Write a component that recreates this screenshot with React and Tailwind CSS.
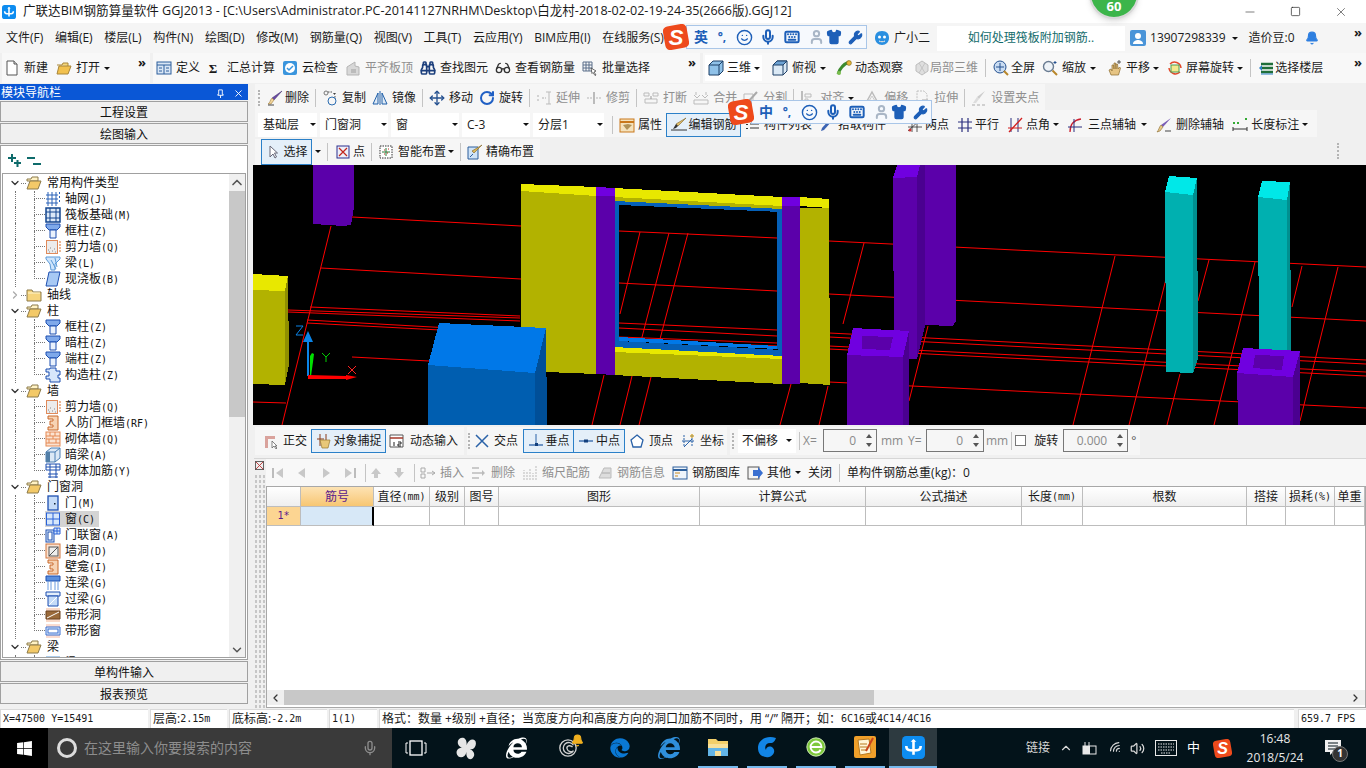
import { Binoculars, Glasses, Move, RotateCw, ChevronDown, ChevronRight, ChevronUp, ChevronLeft, Mic, Bell, Minus, Square, X, Smile, Keyboard, Shirt, Wrench, User, Wifi, Volume2 } from "lucide-react";
import { FaEdge, FaInternetExplorer, FaWindows } from "react-icons/fa";

const ui = "font-['Open_Sans','Noto_Sans_CJK_SC',sans-serif]";
const mono = "font-['DejaVu_Sans_Mono','Noto_Sans_CJK_SC',monospace] text-[10px]";

function Caret({ className = "" }) {
  return <span className={"inline-block w-0 h-0 shrink-0 border-x-[3px] border-t-[3px] border-x-transparent border-t-[#111] " + className} />;
}

function Sep() {
  return <span className="w-px h-[18px] bg-[#c4c4c4] shrink-0" />;
}

function Grip() {
  return <span className="block w-[3px] h-[16px] shrink-0 border-l-2 border-dotted border-[#b4b4b4]" />;
}

function More() {
  return <span className="ml-auto mr-1 text-[13px] font-bold leading-none -mt-3">»</span>;
}

function Ico({ children }) {
  return <svg viewBox="0 0 16 16" className="w-4 h-4 shrink-0">{children}</svg>;
}

function Tool({ ic, t, off, caret, gap = "gap-1", className = "" }) {
  return (
    <div className={"flex items-center shrink-0 whitespace-nowrap " + gap + (off ? " text-[#8f8f8f] " : " ") + className}>
      {ic}
      <span>{t}</span>
      {caret && <Caret />}
    </div>
  );
}

// toolbar icons
const icons = {
  page: <Ico><path d="M3 1h7l3 3v11H3z" fill="#fff" stroke="#555" /><path d="M10 1v3h3" fill="#ddd" stroke="#555" /></Ico>,
  open: <Ico><path d="M1 5h5l1-2h5v3" fill="#f5d77a" stroke="#a8863a" /><path d="M1 14l2-8h12l-3 8z" fill="#f2c14e" stroke="#a8863a" /></Ico>,
  define: <Ico><rect x="1" y="2" width="14" height="12" fill="#d9e6f5" stroke="#2c5f9c" /><path d="M1 5h14M8 5v9M3 8h3M3 11h3M10 8h3M10 11h3" stroke="#2c5f9c" fill="none" /></Ico>,
  cloud: <Ico><rect x="1" y="1" width="14" height="14" rx="2" fill="#3a95dd" /><circle cx="8" cy="8" r="5" fill="#fff" /><path d="M5 8l2 2 4-4" stroke="#3a95dd" strokeWidth="1.5" fill="none" /></Ico>,
  flat: <Ico><path d="M2 15V7l8-5v4l4 1v8z" fill="#d8d8d8" stroke="#b5b5b5" /><path d="M6 9h5v4H6z" fill="#bbb" /></Ico>,
  batch: <Ico><path d="M1 2h9v9H1zM1 5h9M1 8h9M4 2v9M7 2v9" fill="none" stroke="#5b6f8a" /><path d="M9 8l5 3-2 1 2 3-1 .5-2-3-1 1z" fill="#fff" stroke="#333" strokeWidth=".7" /></Ico>,
  cube: <Ico><path d="M5 1h10v10l-4 4H1V5z" fill="#8fc1e8" stroke="#1d3f66" /><path d="M1 5h10v10M11 5l4-4" fill="none" stroke="#1d3f66" /></Ico>,
  topview: <Ico><path d="M5 1h10v10l-4 4H1V5z" fill="#dbe9f5" stroke="#1d3f66" /><path d="M1 5l4-4h10l-4 4z" fill="#6ea3d4" stroke="#1d3f66" /><path d="M11 5v10" stroke="#1d3f66" /></Ico>,
  orbit: <Ico><path d="M2 14C4 8 8 4 13 2" stroke="#3d8b2f" strokeWidth="3" fill="none" /><circle cx="13" cy="3" r="2.4" fill="#e8b93a" stroke="#7a6212" strokeWidth=".6" /><circle cx="3" cy="13" r="2" fill="#7bbf4e" /></Ico>,
  local3d: <Ico><path d="M8 1l6 4v6l-6 4-6-4V5z" fill="#dedede" stroke="#bdbdbd" /><path d="M5 3l6 10M11 3L5 13" stroke="#c5c5c5" /></Ico>,
  full: <Ico><circle cx="7" cy="7" r="6" fill="#c9dcf2" stroke="#24508f" /><path d="M7 3v8M3 7h8" stroke="#24508f" /><path d="M11 11l4 4" stroke="#b8862a" strokeWidth="2" /></Ico>,
  zoom: <Ico><circle cx="6.5" cy="6.5" r="5" fill="#eef3f8" stroke="#6a7c92" strokeWidth="1.4" /><path d="M10.5 10.5l4.5 4.5" stroke="#b8862a" strokeWidth="2" /><path d="M13 1v3M11.5 2.500h3" stroke="#24508f" /></Ico>,
  pan: <Ico><path d="M4 15l-2-5 2-1 1 2V5l1.500 0 .5 4V3l1.500 0 .5 6V4l1.500 0 .5 5 1.500-2 1 1-2 7z" fill="#e6c483" stroke="#8a6a2e" strokeWidth=".7" /><path d="M12 0v4M10 2h4" stroke="#333" strokeWidth=".8" /></Ico>,
  rotate: <Ico><path d="M3 4a6.500 6.500 0 0 1 11 4" stroke="#e2492a" strokeWidth="1.500" fill="none" /><path d="M13 12a6.500 6.500 0 0 1-11-4" stroke="#e2492a" strokeWidth="1.500" fill="none" /><rect x="4" y="5" width="8" height="7" fill="#f4e98e" stroke="#4a9b52" /></Ico>,
  floors: <Ico><path d="M3 4h12M3 8h12M3 12h12" stroke="#1f6f3a" strokeWidth="2.500" /><path d="M1 8l3-3v6z" fill="#2a7fc4" /><path d="M3 14h12" stroke="#2a7fc4" /></Ico>,
  brush: <Ico><path d="M15 1L7 10l-2-2z" fill="#6a4aa5" stroke="#3c2a66" strokeWidth=".5" /><path d="M5 8l2 2-3 4H1c2-1 2-4 4-6z" fill="#f2d59a" stroke="#9c7b3a" strokeWidth=".6" /><path d="M1 15h6" stroke="#444" /></Ico>,
  copy: <Ico><circle cx="4" cy="3" r="2" fill="none" stroke="#777" /><path d="M6 2h5M13 6v3" stroke="#555" strokeDasharray="1.500 1" /><circle cx="10" cy="11" r="4" fill="none" stroke="#2b6cb0" /><path d="M11 3l3 0-1.500 2z" fill="#444" /></Ico>,
  mirror: <Ico><path d="M8 1v14" stroke="#1f5fa8" /><path d="M6 3L1 14h5z" fill="#dfeaf6" stroke="#1f5fa8" /><path d="M10 3l5 11h-5z" fill="#dfeaf6" stroke="#1f5fa8" /></Ico>,
  extend: <Ico><path d="M1 6h3M1 10h3M6 8h4" stroke="#b0b0b0" strokeDasharray="2 1" /><path d="M13 2v12M10 2h5M10 14h5" stroke="#bbb" /></Ico>,
  trim: <Ico><path d="M1 8h5M10 8h5" stroke="#b5b5b5" strokeDasharray="2 1" /><path d="M8 2v12" stroke="#bbb" strokeWidth="2" /></Ico>,
  breakI: <Ico><path d="M1 3h5v3H1zM10 3h5v3h-5z" fill="none" stroke="#bbb" /><path d="M2 9h12v4H2z" fill="none" stroke="#bbb" /><path d="M8 6v3" stroke="#999" /></Ico>,
  merge: <Ico><path d="M3 2v3M13 2v3M1 5l3 3 3-3M9 5l3 3 3-3" fill="none" stroke="#bbb" /><path d="M1 10h14v4H1z" fill="none" stroke="#bbb" /></Ico>,
  split: <Ico><path d="M1 4h9v10H1z" fill="none" stroke="#bbb" /><path d="M5 12L14 2" stroke="#aaa" strokeWidth="2" /></Ico>,
  align: <Ico><path d="M2 1v14h12" stroke="#aaa" fill="none" strokeWidth="1.500" /><path d="M5 4h6v3H5zM5 9h3v3H5z" fill="none" stroke="#bbb" /></Ico>,
  offset: <Ico><path d="M8 2l6 11H2z" fill="none" stroke="#bbb" strokeWidth="1.500" /><path d="M8 6l3 5H5z" fill="none" stroke="#ccc" /></Ico>,
  stretch: <Ico><path d="M3 1h7l3 3v11H3z" fill="none" stroke="#c0c0c0" strokeDasharray="2 1" /><path d="M8 10h6" stroke="#aaa" /></Ico>,
  grip: <Ico><path d="M14 1L8 9l-2-2z" fill="#ccc" /><path d="M1 15h3M6 15h3M11 15h3" stroke="#aaa" /><path d="M6 7l2 2-3 4-3 0z" fill="#ddd" /></Ico>,
  attr: <Ico><rect x="1" y="2" width="14" height="13" fill="#f4e2bd" stroke="#c9781c" /><path d="M1 5h14" stroke="#c9781c" strokeWidth="2" /><path d="M4 8l4 5 5-5-4-1z" fill="#b09257" /></Ico>,
  rebar: <Ico><path d="M15 1L7 9l-2-2z" fill="#dfbe6a" stroke="#7d6125" strokeWidth=".6" /><path d="M5 7l2 2-2 2-3 1z" fill="#333" /><path d="M0 13h16" stroke="#333" /></Ico>,
  list: <Ico><path d="M2 3v1M2 7v1M2 11v1" stroke="#333" strokeWidth="2" /><path d="M5 3h9M5 7h9M5 11h9" stroke="#333" /></Ico>,
  pick: <Ico><path d="M12 2l2 2-8 9-3 1 1-3z" fill="#3a63b3" /></Ico>,
  twop: <Ico><path d="M1 14L14 2M1 10h14M5 2v13M10 2v13" stroke="#333" strokeWidth=".8" /><circle cx="3" cy="13" r="1.500" fill="#c33" /><circle cx="13" cy="3" r="1.500" fill="#3a3" /></Ico>,
  parallel: <Ico><path d="M1 5h14M1 11h14M5 1v14M11 1v14" stroke="#2b2f7e" strokeWidth="1.200" /></Ico>,
  angle: <Ico><path d="M4 1v14M11 1v14" stroke="#2b2f7e" /><path d="M2 15L15 1" stroke="#d41f1f" strokeWidth="1.300" /><path d="M1 11h14" stroke="#d41f1f" /></Ico>,
  threep: <Ico><path d="M3 15C3 7 7 3 14 2" stroke="#cc1f2f" strokeWidth="1.300" fill="none" /><path d="M1 10h14M7 2v13" stroke="#2b2f7e" /></Ico>,
  delaxis: <Ico><path d="M15 1L7 10l-2-2z" fill="#7a5db5" /><path d="M5 8l2 2-3 4-3 1c2-2 2-5 4-7z" fill="#e5c888" stroke="#8a6a2e" strokeWidth=".6" /><path d="M9 14h6" stroke="#444" /></Ico>,
  dim: <Ico><path d="M1 12h14M1 10v4M15 10v4" stroke="#333" /><rect x="1" y="5" width="2" height="2" fill="#3a3" /><rect x="13" y="1" width="2" height="2" fill="#3a3" /><rect x="5" y="5" width="2" height="2" fill="#3a3" /></Ico>,
  select: <Ico><path d="M5 2v11l3-3 2 4 1.500-1-2-4h3z" fill="#fff" stroke="#667" /></Ico>,
  point: <Ico><rect x="2" y="2" width="12" height="12" fill="#eef0fa" stroke="#2b2f8e" /><path d="M4 4l8 8M12 4l-8 8" stroke="#c2261c" strokeWidth="1.200" /></Ico>,
  smart: <Ico><rect x="2" y="2" width="12" height="12" fill="#fff" stroke="#333" strokeDasharray="1.500 1" /><path d="M4 8h8M8 4v8" stroke="#2d7d3a" /><path d="M6 6h1M9 9h1M6 10h1M10 5h1" stroke="#c2261c" /></Ico>,
  exact: <Ico><path d="M1 3h10v12H1z" fill="#cfe3f7" stroke="#2c5f9c" /><path d="M15 1L7 9l-2-2z" fill="#dcb85a" stroke="#7d6125" strokeWidth=".6" /><path d="M3 13l3-3" stroke="#2c5f9c" /></Ico>,
  ortho: <Ico><path d="M2 15V3h10v3H5v9z" fill="#d9a29c" /><path d="M9 8v7l2-2 2 3 1-1-2-2h2z" fill="#fff" stroke="#555" strokeWidth=".7" /></Ico>,
  snap: <Ico><path d="M4 1v12M10 1v6M1 6h7" stroke="#8a3a1a" /><path d="M4 7h10l-2 8H6z" fill="#e8c879" stroke="#95762c" strokeWidth=".7" /></Ico>,
  dyn: <Ico><path d="M1 2h13v12H1z" fill="#fff" stroke="#555" /><path d="M1 5h13" stroke="#a5382a" strokeWidth="1.500" /><path d="M5 9v4M9 9h3v2h-3v2h3" stroke="#222" fill="none" /></Ico>,
  cross: <Ico><path d="M2 2l12 12M14 2L2 14" stroke="#2a62a8" strokeWidth="1.500" /></Ico>,
  perp: <Ico><path d="M1 12h14" stroke="#2a62a8" strokeWidth="1.300" /><path d="M8 1v11" stroke="#2a62a8" /><rect x="7" y="10" width="3" height="3" fill="#123f7c" /></Ico>,
  mid: <Ico><path d="M1 8h14" stroke="#2a62a8" strokeWidth="1.300" /><rect x="6" y="6.500" width="4" height="3" fill="#123f7c" /></Ico>,
  vertex: <Ico><path d="M8 2l6 5-2 7H4L2 7z" fill="#fff" stroke="#2a62a8" strokeWidth="1.300" /></Ico>,
  coord: <Ico><path d="M4 2v12M12 2v12" stroke="#2a62a8" strokeDasharray="2 1" /><path d="M2 8h12M4 14l8-8" stroke="#2a62a8" /><circle cx="12" cy="3" r="1.300" fill="none" stroke="#d4a017" /></Ico>,
  first: <Ico><path d="M3 3v10" stroke="#bcbcbc" strokeWidth="2" /><path d="M13 3L6 8l7 5z" fill="#c8c8c8" /></Ico>,
  prev: <Ico><path d="M11 3L4 8l7 5z" fill="#c8c8c8" /></Ico>,
  next: <Ico><path d="M5 3l7 5-7 5z" fill="#c8c8c8" /></Ico>,
  last: <Ico><path d="M13 3v10" stroke="#bcbcbc" strokeWidth="2" /><path d="M3 3l7 5-7 5z" fill="#c8c8c8" /></Ico>,
  up: <Ico><path d="M8 3l5 6h-3v4H6V9H3z" fill="#c8c8c8" /></Ico>,
  down: <Ico><path d="M8 13L3 7h3V3h4v4h3z" fill="#c8c8c8" /></Ico>,
  ins: <Ico><path d="M1 3h4v4H1zM1 9h4v4H1z" fill="none" stroke="#aaa" /><path d="M7 8h8M12 6l3 2-3 2" stroke="#aaa" fill="none" /></Ico>,
  del: <Ico><path d="M1 3h7M1 8h12M1 13h7" stroke="#bbb" strokeWidth="1.500" /><path d="M11 5l3 3-3 3z" fill="#bbb" /></Ico>,
  scale: <Ico><path d="M2 15V5M5 15V7M8 15V3M11 15V8M14 15V1" stroke="#bbb" strokeDasharray="2 1" /></Ico>,
  info: <Ico><path d="M2 13L7 3h7v10z" fill="#ddd" stroke="#bbb" /><path d="M5 8h8" stroke="#aaa" /></Ico>,
  lib: <Ico><rect x="1" y="2" width="14" height="12" fill="#eef4fb" stroke="#2c5f9c" /><path d="M1 5h14" stroke="#2c5f9c" strokeWidth="2" /><path d="M3 8h5M3 11h3" stroke="#c98a1c" /></Ico>,
  other: <Ico><rect x="1" y="2" width="11" height="12" fill="#f4f4f4" stroke="#555" /><path d="M6 5h5V2l5 6-5 6v-3H6z" fill="#3a6fd0" /></Ico>,
};

function Row1() {
  return (
    <div className="h-[30px] flex gap-[3px] pl-[2px] shrink-0">
      <div className="w-[148px] shrink-0 bg-[#f8f8f8] flex items-center pl-[2px] gap-[8px]">
        <Tool ic={icons.page} t="新建" />
        <Tool ic={icons.open} t="打开" caret />
        <More />
      </div>
      <div className="w-[547px] shrink-0 bg-[#f8f8f8] flex items-center pl-[3px] gap-[7px]">
        <Tool ic={icons.define} t="定义" />
        <Tool ic={<span className="w-3 text-center font-bold text-[13px] leading-none font-['Liberation_Serif',serif]">Σ</span>} t="汇总计算" gap="gap-2" />
        <Tool ic={icons.cloud} t="云检查" />
        <Tool ic={icons.flat} t="平齐板顶" off />
        <Tool ic={<Binoculars className="w-4 h-4 text-[#1c3f7c]" strokeWidth={2.5} />} t="查找图元" />
        <Tool ic={<Glasses className="w-4 h-4 text-[#333]" />} t="查看钢筋量" />
        <Tool ic={icons.batch} t="批量选择" />
        <More />
      </div>
      <div className="flex-1 min-w-0 bg-[#f8f8f8] flex items-center pl-[2px] gap-[7px]">
        <Tool ic={icons.cube} t="三维" caret gap="gap-[3px]" className="bg-white h-[26px] pl-[3px] pr-[2px]" />
        <Tool ic={icons.topview} t="俯视" caret className="ml-[3px]" />
        <Tool ic={icons.orbit} t="动态观察" gap="gap-[3px]" className="ml-[3px]" />
        <Tool ic={icons.local3d} t="局部三维" off gap="gap-0" className="ml-[4px]" />
        <Sep />
        <Tool ic={icons.full} t="全屏" gap="gap-[2px]" />
        <Tool ic={icons.zoom} t="缩放" caret />
        <Tool ic={icons.pan} t="平移" caret gap="gap-[3px]" className="ml-[4px]" />
        <Tool ic={icons.rotate} t="屏幕旋转" caret gap="gap-[3px]" className="ml-px" />
        <Sep />
        <Tool ic={icons.floors} t="选择楼层" gap="gap-px" />
        <More />
      </div>
    </div>
  );
}

function Combo({ t, w }) {
  return (
    <div className={"h-[24px] bg-white flex items-center justify-between pl-[5px] pr-px shrink-0 " + w}>
      <span>{t}</span>
      <Caret />
    </div>
  );
}

function ToolRows() {
  return (
    <>
      <div className="h-[26px] w-[790px] ml-[2px] mt-px pt-[2px] bg-[#f6f6f6] flex items-center pl-[3px] gap-[6px] shrink-0">
        <Grip />
        <Tool ic={icons.brush} t="删除" gap="gap-[2px]" />
        <Sep />
        <Tool ic={icons.copy} t="复制" />
        <Tool ic={icons.mirror} t="镜像" />
        <Sep />
        <Tool ic={<Move className="w-4 h-4 text-[#24508f]" />} t="移动" />
        <Tool ic={<RotateCw className="w-4 h-4 text-[#1f5fc4]" strokeWidth={3} />} t="旋转" />
        <Sep />
        <Tool ic={icons.extend} t="延伸" off />
        <Tool ic={icons.trim} t="修剪" off />
        <Sep />
        <Tool ic={icons.breakI} t="打断" off />
        <Tool ic={icons.merge} t="合并" off />
        <Tool ic={icons.split} t="分割" off />
        <Sep />
        <Tool ic={icons.align} t="对齐" off caret />
        <Tool ic={icons.offset} t="偏移" off className="ml-[4px]" />
        <Tool ic={icons.stretch} t="拉伸" off />
        <Sep />
        <Tool ic={icons.grip} t="设置夹点" off />
      </div>
      <div className="h-[27px] w-[1062px] ml-[2px] flex items-center gap-[3px] bg-[#f6f6f6] shrink-0 pl-[3px] pt-[2px]">
        <Combo t="基础层" w="w-[59px]" />
        <Combo t="门窗洞" w="w-[68px]" />
        <Combo t="窗" w="w-[68px]" />
        <Combo t="C-3" w="w-[68px]" />
        <Combo t="分层1" w="w-[71px]" />
        <span className="w-[2px]" />
        <Sep />
        <div className="flex items-center gap-[4px] ml-[3px]">
          <Tool ic={icons.attr} t="属性" gap="gap-[3px]" />
          <div className="h-[24px] w-[75px] shrink-0 border border-[#2b80c8] bg-[#e4eff9] flex items-center justify-center gap-[2px]">
            {icons.rebar}<span className="whitespace-nowrap">编辑钢筋</span>
          </div>
          <Tool ic={icons.list} t="构件列表" gap="gap-[3px]" />
        </div>
        <div className="flex items-center gap-[8px] ml-[3px]">
          <Tool ic={icons.pick} t="拾取构件" />
          <Tool ic={icons.twop} t="两点" gap="gap-[2px]" className="ml-[13px]" />
          <Tool ic={icons.parallel} t="平行" gap="gap-[2px]" />
          <Tool ic={icons.angle} t="点角" gap="gap-[3px]" caret />
          <Tool ic={icons.threep} t="三点辅轴" gap="gap-[5px]" caret />
          <Tool ic={icons.delaxis} t="删除辅轴" className="ml-px" />
          <Tool ic={icons.dim} t="长度标注" gap="gap-[3px]" caret />
        </div>
      </div>
      <div className="h-[28px] flex shrink-0 items-center">
        <div className="h-[26px] w-[285px] ml-[2px] mt-px bg-[#f6f6f6] flex items-center pl-[6px] gap-[6px]">
          <div className="h-[26px] w-[51px] shrink-0 border border-[#2b80c8] bg-[#e4eff9] flex items-center justify-center gap-[2px] whitespace-nowrap">
            {icons.select}<span>选择</span>
          </div>
          <Caret className="-ml-[3px]" />
          <Sep />
          <Tool ic={icons.point} t="点" gap="gap-[2px]" className="ml-px" />
          <Sep />
          <Tool ic={icons.smart} t="智能布置" />
          <Caret className="-ml-[4px]" />
          <Sep />
          <Tool ic={icons.exact} t="精确布置" gap="gap-[3px]" />
        </div>
        <span className="ml-auto mr-[26px]"><Grip /></span>
      </div>
    </>
  );
}

// 3D view
function Scene() {
  const reds = [
    [352,218,521,227],[321,269,521,280],[288,311,520,319],[288,313,520,322],[310,308,520,317],[307,321,450,329],[307,324,440,331],[253,403,286,404],[352,358,429,362],
    [331,227,282,426],[619,232,777,239],[619,284,777,292],[619,324,777,331],[619,329,777,337],[619,338,777,344],[619,341,777,347],[640,233,620,315],[669,234,641,342],[688,234,660,340],
    [604,376,592,426],[632,377,620,426],[651,378,639,426],[791,385,780,426],[828,387,819,426],
    [829,242,1366,268],[829,295,1366,322],[829,334,1366,361],[829,338,1366,365],[829,347,1366,373],[829,350,1366,377],[829,383,1366,409],
    [1115,257,1073,426],[1166,280,1129,426],[1209,261,1198,302],[1180,375,1167,426],[1255,263,1214,426],[1302,267,1292,308],[1338,268,1300,422],[864,244,843,325],[928,327,909,402],
  ];
  const solid = [
    ["#5b00aa","313,166 354,166 354,208 351,226 343,227 313,225"],
    ["#e8e800","253,275 288,277 285,292 253,291"],
    ["#b2b200","253,291 285,292 288,365 285,386 253,385"],
    ["#8f8f00","285,292 288,277 289,365 285,386"],
    ["#b2b200","521,192 596,197 596,375 521,372"],
    ["#e8e800","521,185 596,188 596,197 521,192"],
    ["#0560b8","614,198 619,203 619,345 614,348"],
    ["#0560b8","777,211 782,207 782,355 777,350"],
    ["#0560b8","614,202 782,210 782,213 619,206"],
    ["#b2b200","614,196 782,204 782,210 614,202"],
    ["#e8e800","614,189 782,198 782,207 614,198"],
    ["#0078e8","619,338 777,347 777,350 619,342"],
    ["#0560b8","619,342 782,351 782,358 614,349"],
    ["#e8e800","614,348 782,357 782,360 614,353"],
    ["#b2b200","614,353 782,360 782,385 614,376"],
    ["#7000e0","596,188 615,189 615,197 596,197"],
    ["#5b00aa","596,197 615,197 615,376 596,375"],
    ["#b2b200","800,209 829,209 830,386 800,384"],
    ["#e8e800","800,198 829,200 829,209 800,207"],
    ["#7000e0","782,198 800,198 800,207 782,207"],
    ["#5b00aa","782,207 800,207 800,385 782,385"],
    ["#0078e8","439,324 546,329 535,374 428,366"],
    ["#005eb0","428,366 535,374 535,426 428,426"],
    ["#004f98","546,329 547,426 535,426 535,374"],
    ["#5b00aa","925,166 956,166 956,322 953,327 925,326"],
    ["#4a0090","920,166 925,166 925,327 917,360 917,178"],
    ["#5b00aa","893,179 917,178 917,360 894,360"],
    ["#7000e0","897,166 920,166 917,178 893,179"],
    ["#7000e0","853,329 909,332 903,358 847,356"],
    ["#5b00aa","862,337 893,338 890,351 862,350"],
    ["#5b00aa","847,356 903,358 903,426 847,426"],
    ["#4a0090","909,332 909,426 903,426 903,358"],
    ["#00b0b0","1165,193 1193,196 1193,374 1166,373"],
    ["#009090","1197,179 1198,360 1193,374 1193,196"],
    ["#00e8e8","1169,177 1197,179 1193,196 1165,193"],
    ["#00b0b0","1258,198 1287,201 1287,354 1259,354"],
    ["#009090","1290,183 1291,354 1287,354 1287,201"],
    ["#00e8e8","1262,182 1290,183 1287,201 1258,198"],
    ["#7000e0","1243,349 1300,352 1293,378 1237,374"],
    ["#5b00aa","1255,356 1284,357 1282,371 1253,369"],
    ["#5b00aa","1237,374 1293,378 1293,426 1238,426"],
    ["#4a0090","1300,352 1300,426 1293,426 1293,378"],
  ];
  return (
    <svg viewBox="253 166 1113 260" className="w-full h-[260px] block bg-black shrink-0">
      {reds.map((l, i) => <line key={i} x1={l[0]} y1={l[1]} x2={l[2]} y2={l[3]} stroke="#ff0000" strokeWidth="1" />)}
      {solid.map((p, i) => <polygon key={i} fill={p[0]} points={p[1]} shapeRendering="crispEdges" />)}
      <path d="M296 327h7l-7 9h7" fill="none" stroke="#0a84e8" />
      <path d="M307 377V343h-4l5-11 5 11h-4v34z" fill="#0a84e8" />
      <path d="M310 377v-20l2-3 2 1-1 8-2 14z" fill="#00e000" />
      <path d="M322 354l4 4 4-4M326 358v5" stroke="#00d000" fill="none" />
      <path d="M308 376l38 1v-1l11 2-11 3v-1l-38 0z" fill="#ff0000" />
      <path d="M348 367l8 8M356 367l-8 8" stroke="#ff2020" fill="none" />
    </svg>
  );
}

function SpinBox({ v, w }) {
  return (
    <div className={"h-[23px] border border-[#777] flex items-center justify-end shrink-0 " + w}>
      <span className="text-[#8a8a8a] mr-[6px]">{v}</span>
      <div className="w-[14px] flex flex-col items-center gap-[5px]">
        <span className="w-0 h-0 border-x-[3px] border-b-[4px] border-x-transparent border-b-[#555]" />
        <span className="w-0 h-0 border-x-[3px] border-t-[4px] border-x-transparent border-t-[#555]" />
      </div>
    </div>
  );
}

function SnapBar() {
  return (
    <div className="h-[33px] flex items-center gap-[3px] ml-[2px] shrink-0 pb-[2px]">
      <div className="w-[209px] shrink-0 h-[28px] bg-[#f6f6f6] flex items-center pl-[8px] gap-[3px]">
        <Tool ic={icons.ortho} t="正交" />
        <div className="h-[24px] w-[75px] shrink-0 ml-[1px] border border-[#2b80c8] bg-[#e4eff9] flex items-center justify-center gap-[2px]">
          {icons.snap}<span className="whitespace-nowrap">对象捕捉</span>
        </div>
        <Tool ic={icons.dyn} t="动态输入" gap="gap-[5px]" />
      </div>
      <div className="w-[260px] shrink-0 h-[28px] bg-[#f6f6f6] flex items-center pl-[1px]">
        <Grip />
        <span className="w-[3px]" />
        <Tool ic={icons.cross} t="交点" />
        <div className="h-[24px] w-[51px] shrink-0 ml-[5px] border border-[#2b80c8] bg-[#e4eff9] flex items-center justify-center gap-[2px]">{icons.perp}<span>垂点</span></div>
        <div className="h-[24px] w-[51px] shrink-0 border border-l-0 border-[#2b80c8] bg-[#e4eff9] flex items-center justify-center gap-[2px]">{icons.mid}<span>中点</span></div>
        <span className="w-[4px]" />
        <Tool ic={icons.vertex} t="顶点" />
        <span className="w-[7px]" />
        <Tool ic={icons.coord} t="坐标" />
      </div>
      <div className="w-[410px] shrink-0 h-[28px] bg-[#f6f6f6] flex items-center pl-[2px] text-[#8a8a8a]">
        <Grip />
        <div className="w-[58px] h-[24px] ml-[3px] bg-white flex items-center justify-between pl-[4px] pr-[4px] text-[#1a1a1a]"><span>不偏移</span><Caret /></div>
        <span className="w-px h-[18px] bg-[#c4c4c4] mx-[3px]" />
        <span className="w-[20px]">X=</span>
        <SpinBox v="0" w="w-[54px]" />
        <span className="w-[31px] pl-[4px]">mm</span>
        <span className="w-[18px]">Y=</span>
        <SpinBox v="0" w="w-[58px]" />
        <span className="pl-[2px]">mm</span>
        <span className="w-px h-[18px] bg-[#c4c4c4] mx-[3px]" />
        <span className="w-[11px] h-[11px] border border-[#777] bg-white" />
        <span className="ml-[8px] mr-[5px] text-[#1a1a1a] whitespace-nowrap">旋转</span>
        <SpinBox v="0.000" w="w-[65px]" />
        <span className="ml-[3px] text-[#555]">°</span>
      </div>
    </div>
  );
}

const heads = ["", "筋号", ["直径", "(mm)"], "级别", "图号", "图形", "计算公式", "公式描述", ["长度", "(mm)"], "根数", "搭接", ["损耗", "(%)"], "单重"];
const gridCols = "grid-cols-[34px_73px_56px_35px_34px_201px_166px_156px_61px_164px_39px_49px_1fr]";

function RebarGrid() {
  return (
    <div className="flex-1 border border-[#a8a8a8] bg-white flex flex-col min-h-0">
      <div className={"grid h-[20px] shrink-0 " + gridCols}>
        {heads.map((h, i) => (
          <div key={i} className={"flex items-center justify-center border-r border-b border-[#bdbdbd] whitespace-nowrap overflow-hidden " + (i === 1 ? "bg-gradient-to-b from-[#fde3b3] to-[#f7c672] text-[#5a1a8c]" : "bg-gradient-to-b from-white to-[#efefef]")}>
            {Array.isArray(h) ? <>{h[0]}<span className={mono}>{h[1]}</span></> : h}
          </div>
        ))}
      </div>
      <div className={"grid h-[19px] shrink-0 " + gridCols}>
        {heads.map((h, i) => (
          <div key={i} className={"flex items-center justify-center border-b border-[#bdbdbd] " + (i === 0 ? "bg-[#fcd592] text-[#5a1a8c] border-r" : i === 1 ? "bg-[#d7e8f7] border-r-2 border-r-black" : "border-r")}>
            {i === 0 ? <span className={mono}>1*</span> : ""}
          </div>
        ))}
      </div>
      <div className="flex-1" />
      <div className="h-[15px] flex items-center bg-[#efefef] mb-[2px] shrink-0">
        <ChevronLeft className="w-[17px] h-3 text-[#333]" strokeWidth={2.5} />
        <div className="w-[590px] h-full bg-[#c8c8c8]" />
        <ChevronRight className="ml-auto w-[17px] h-3 text-[#333] mr-[1px]" strokeWidth={2.5} />
      </div>
    </div>
  );
}

function BottomPanel() {
  return (
    <div className="flex-1 flex min-h-0 border-t border-[#d6d6d6] ml-[1px]">
      <div className="w-[12px] flex flex-col shrink-0">
        <svg viewBox="0 0 10 10" className="w-[9px] h-[9px] mt-[2px] ml-[1px]"><rect x=".5" y=".5" width="9" height="9" fill="#eee" stroke="#555" /><path d="M1 1l8 8M9 1L1 9" stroke="#b33" /></svg>
        <div className="flex-1 mt-1 bg-[radial-gradient(#c6c6c6_1px,transparent_1px)] bg-[length:4px_5px]" />
      </div>
      <div className="flex-1 flex flex-col min-w-0">
        <div className="h-[27px] shrink-0 bg-[#f8f8f8] flex items-center gap-[7px] pl-[4px]">
          <span className="flex gap-[8px]">{icons.first}{icons.prev}{icons.next}{icons.last}</span>
          <Sep />
          <span className="flex gap-[7px] -ml-[5px]">{icons.up}{icons.down}</span>
          <Sep />
          <Tool ic={icons.ins} t="插入" off className="-ml-[2px]" />
          <Tool ic={icons.del} t="删除" off />
          <Tool ic={icons.scale} t="缩尺配筋" off />
          <Tool ic={icons.info} t="钢筋信息" off />
          <Tool ic={icons.lib} t="钢筋图库" />
          <Tool ic={icons.other} t="其他" caret />
          <span>关闭</span>
          <Sep />
          <span>单构件钢筋总重(kg)：0</span>
        </div>
        <RebarGrid />
      </div>
    </div>
  );
}

// tree icons
const Col = <Ico><path d="M1 1h14v3l-3 3H4L1 4z" fill="#7fa9ea" stroke="#1d4fb0" /><path d="M5 7h6v8H5z" fill="#e9f1fc" stroke="#1d4fb0" /></Ico>;
const Shear = <Ico><rect x="1.500" y="1.500" width="11" height="13" fill="#ececec" stroke="#e08a5a" /><path d="M14 3h2M14 6h2M14 9h2M14 12h2" stroke="#d9702a" /><path d="M3 11h1M5 9h1M7 12h1M9 10h1M4 13h1M10 13h1" stroke="#888" /></Ico>;
const Gate = <Ico><path d="M3 1h10v14H3V12h5V10H5V6h3V4H3z" fill="#f7d3b4" stroke="#c9682a" /></Ico>;
const Brick = <Ico><rect x="1" y="1" width="14" height="14" fill="#fbe3d2" stroke="#e58a55" /><path d="M1 5h14M1 8h14M1 12h14M5 1v4M10 1v4M8 5v3M4 8v4M11 8v4" stroke="#e58a55" /></Ico>;
const treeIcons = {
  grid: <Ico><path d="M3 1v14M7 1v14M11 1v14M1 4h12M1 8h12M1 12h12" stroke="#2a62b8" /><path d="M14 2h1M14 6h1M14 10h1" stroke="#2a62b8" strokeWidth="2" /></Ico>,
  raft: <Ico><rect x="1" y="1" width="14" height="14" fill="#dbe8f7" stroke="#13458f" strokeWidth="1.500" /><path d="M1 5h14M1 11h14M5 1v14M11 1v14" stroke="#13458f" /></Ico>,
  col: Col,
  shear: Shear,
  beam: <Ico><path d="M1 2h14v2L10 9v6H6l-1-6L1 4z" fill="#cfe5fb" stroke="#5b9ad8" /><path d="M6 5l5 9M10 3l2 9" stroke="#5b9ad8" /></Ico>,
  slab: <Ico><path d="M4 1h11l-3 14H1z" fill="#a7c9f4" stroke="#1d4fb0" /></Ico>,
  struct: <Ico><path d="M5 1h6v3h4v4h-2v3h2v4H5v-3H1V9h3V5H1V2h4z" fill="#d7e6fa" stroke="#1d4fb0" /></Ico>,
  gate: Gate,
  brick: Brick,
  dark: <Ico><path d="M1 5l5-4h9v10l-5 4H1z" fill="#dbe8f5" stroke="#4a7fb4" /><path d="M1 5h9v10M10 5l5-4" stroke="#4a7fb4" fill="none" /><rect x="1" y="5" width="4" height="10" fill="#527fa8" /></Ico>,
  mrebar: <Ico><path d="M1 1h14v6H1z" fill="#fff" stroke="#1d4fb0" /><path d="M5 1v14M11 1v14M1 4h14M3 11h10M3 14h10" stroke="#1d4fb0" /></Ico>,
  door: <Ico><rect x="3" y="1" width="10" height="14" fill="#c6dcf8" stroke="#1d4fb0" strokeWidth="1.300" /><rect x="9" y="8" width="1.500" height="1.500" fill="#123" /></Ico>,
  win: <Ico><rect x="1.500" y="2" width="13" height="12" fill="#d6e7fb" stroke="#2a62d8" /><path d="M8 2v12M1.500 8h13" stroke="#2a62d8" /></Ico>,
  dwin: <Ico><rect x="1" y="3" width="8" height="12" fill="#e3eefb" stroke="#1d4fb0" /><rect x="3" y="5" width="4" height="8" fill="#fff" stroke="#1d4fb0" /><path d="M9 1h6v6H9zM12 1v6M9 4h6" fill="#d6e7fb" stroke="#2a62d8" /></Ico>,
  hole: <Ico><rect x="1" y="1" width="14" height="14" fill="#fbe3d2" stroke="#d0743c" /><rect x="4" y="4" width="9" height="9" fill="#eee" stroke="#555" /><path d="M4 13l9-9" stroke="#555" /></Ico>,
  link: <Ico><path d="M1 1h14v5H1z" fill="#5b8fdd" stroke="#1d4fb0" /><path d="M3 6v9M13 6v9M6 6v9M10 6v9" stroke="#6a9be0" /></Ico>,
  lintel: <Ico><path d="M1 1h14v4H1z" fill="#e3eefb" stroke="#1d4fb0" /><path d="M3 5h10v10H3z" fill="#c6dcf8" stroke="#1d4fb0" /><path d="M4 14l8-8" stroke="#fff" /></Ico>,
  bhole: <Ico><path d="M1 1h14v14H1z" fill="#f9d9c9" /><path d="M1 4h14v8H1z" fill="#9a6a3a" stroke="#6a4522" /><path d="M2 11L14 5" stroke="#fff" /></Ico>,
  bwin: <Ico><path d="M1 1h14v14H1z" fill="#fbdcd0" /><path d="M1 4h14v8H1z" fill="#e3eefb" stroke="#3a6fd0" /><rect x="3" y="6" width="10" height="4" fill="#fff" stroke="#3a6fd0" /></Ico>,
};

const tree = [
  { f: "常用构件类型", open: 1 },
  { i: "grid", t: "轴网", k: "(J)" }, { i: "raft", t: "筏板基础", k: "(M)" }, { i: "col", t: "框柱", k: "(Z)" }, { i: "shear", t: "剪力墙", k: "(Q)" }, { i: "beam", t: "梁", k: "(L)" }, { i: "slab", t: "现浇板", k: "(B)", last: 1 },
  { f: "轴线" },
  { f: "柱", open: 1 },
  { i: "col", t: "框柱", k: "(Z)" }, { i: "col", t: "暗柱", k: "(Z)" }, { i: "col", t: "端柱", k: "(Z)" }, { i: "struct", t: "构造柱", k: "(Z)", last: 1 },
  { f: "墙", open: 1 },
  { i: "shear", t: "剪力墙", k: "(Q)" }, { i: "gate", t: "人防门框墙", k: "(RF)" }, { i: "brick", t: "砌体墙", k: "(Q)" }, { i: "dark", t: "暗梁", k: "(A)" }, { i: "mrebar", t: "砌体加筋", k: "(Y)", last: 1 },
  { f: "门窗洞", open: 1 },
  { i: "door", t: "门", k: "(M)" }, { i: "win", t: "窗", k: "(C)", sel: 1 }, { i: "dwin", t: "门联窗", k: "(A)" }, { i: "hole", t: "墙洞", k: "(D)" }, { i: "gate", t: "壁龛", k: "(I)" }, { i: "link", t: "连梁", k: "(G)" }, { i: "lintel", t: "过梁", k: "(G)" }, { i: "bhole", t: "带形洞" }, { i: "bwin", t: "带形窗", last: 1 },
  { f: "梁", open: 1 },
  { i: "beam", t: "梁", k: "(L)" },
];

function Folder({ open }) {
  return open ? (
    <svg viewBox="0 0 16 14" className="w-4 h-[14px] shrink-0"><path d="M1 3h4l1-2h6v4H1z" fill="#fff2c4" stroke="#8c7a4a" /><path d="M1 13l3-8h11l-3 8z" fill="#f3c968" stroke="#8c7a4a" /></svg>
  ) : (
    <svg viewBox="0 0 16 14" className="w-4 h-[14px] shrink-0"><path d="M1 2h5l1 2h8v9H1z" fill="#f6d47c" stroke="#8c7a4a" /><path d="M2 5h12" stroke="#fff6d0" /></svg>
  );
}

function TreeRow({ r }) {
  if (r.f) {
    return (
      <div className="flex items-center h-4">
        <span className="w-[6px]" />
        {r.open ? <ChevronDown className="w-3 h-3 text-[#333] shrink-0" strokeWidth={2.5} /> : <ChevronRight className="w-3 h-3 text-[#aaa] shrink-0" strokeWidth={2.5} />}
        <span className="w-[5px] border-b border-dotted border-[#777]" />
        <Folder open={r.open} />
        <span className="ml-[5px] text-[#111]">{r.f}</span>
      </div>
    );
  }
  return (
    <div className="flex items-center h-4">
      <span className="w-[12px]" />
      <span className="w-[19px] h-4 border-l border-dotted border-[#777]" />
      <span className="w-[11px] h-4 flex flex-col shrink-0">
        <span className="h-2 border-l border-b border-dotted border-[#777]" />
        {!r.last && <span className="h-2 border-l border-dotted border-[#777]" />}
      </span>
      <div className={"flex items-center h-4 pr-[4px] " + (r.sel ? "bg-[#d4d4d4] " : "")}>
        {treeIcons[r.i]}
        <span className="ml-[4px] whitespace-nowrap text-[#111]">{r.t}<span className={mono}>{r.k}</span></span>
      </div>
    </div>
  );
}

function SideBtn({ t }) {
  return <div className="h-[21px] mb-px pt-[2px] bg-[#f0f0f0] border border-[#a0a0a0] flex items-center justify-center text-[#111] shrink-0">{t}</div>;
}

function Sidebar() {
  return (
    <div className="w-[248px] shrink-0 flex flex-col pt-px">
      <div className="h-[16px] pt-[2px] bg-[#0a57d6] text-white flex items-center pl-[1px] pr-[4px] shrink-0">
        <span>模块导航栏</span>
        <svg viewBox="0 0 10 10" className="w-[9px] h-[9px] ml-auto"><path d="M3 1h4v5h1v1H2V6h1zM5 7v3" fill="none" stroke="#fff" /></svg>
        <X className="w-[11px] h-[11px] ml-[8px]" />
      </div>
      <div className="h-px shrink-0" />
      <SideBtn t="工程设置" />
      <SideBtn t="绘图输入" />
      <div className="h-[515px] border border-[#a0a0a0] bg-white flex flex-col shrink-0 mb-px">
        <div className="h-[27px] shrink-0 flex items-center pl-[5px] gap-[4px]">
          <svg viewBox="0 0 16 14" className="w-4 h-[14px]"><path d="M2 5h8M6 1v8M8 10h7M11.500 7v7" stroke="#0e6b6b" strokeWidth="2" /></svg>
          <svg viewBox="0 0 16 14" className="w-4 h-[14px]"><path d="M1 5h8M7 11h8" stroke="#0e6b6b" strokeWidth="2" /></svg>
        </div>
        <div className="flex-1 mx-[1px] mb-px border border-[#a0a0a0] flex min-h-0 overflow-hidden">
          <div className="flex-1 overflow-hidden pt-px">
            {tree.map((r, i) => <TreeRow key={i} r={r} />)}
          </div>
          <div className="w-[16px] shrink-0 flex flex-col bg-[#f0f0f0]">
            <ChevronUp className="w-[16px] h-[17px] text-[#555]" strokeWidth={2.5} />
            <div className="h-[226px] bg-[#c8c8c8]" />
            <div className="flex-1" />
            <ChevronDown className="w-[16px] h-[14px] text-[#555]" strokeWidth={2.5} />
          </div>
        </div>
      </div>
      <SideBtn t="单构件输入" />
      <SideBtn t="报表预览" />
    </div>
  );
}

function StatusCell({ w, children, className = "" }) {
  return <div className={"h-[19px] bg-white flex items-center pl-[2px] overflow-hidden whitespace-pre border-t border-l border-[#dadada] shrink-0 " + w + " " + className}>{children}</div>;
}

function StatusBar() {
  return (
    <div className="h-[20px] flex items-end gap-[2px] shrink-0 bg-[#f0f0f0]">
      <StatusCell w="w-[148px]"><span className={mono}>X=47500 Y=15491</span></StatusCell>
      <StatusCell w="w-[77px]"><span>层高:</span><span className={mono}>2.15m</span></StatusCell>
      <StatusCell w="w-[98px]"><span>底标高:</span><span className={mono}>-2.2m</span></StatusCell>
      <StatusCell w="w-[48px]"><span className={mono}>1(1)</span></StatusCell>
      <StatusCell w="w-[915px]">
        <span>格式：数量 +级别 +直径；当宽度方向和高度方向的洞口加筋不同时，用 “/” 隔开；如：</span>
        <span className={mono}>6C16</span><span>或</span><span className={mono}>4C14/4C16</span>
      </StatusCell>
      <StatusCell w="w-[70px]" className="ml-[2px]"><span className={mono}>659.7 FPS</span></StatusCell>
    </div>
  );
}

function AppLogo({ className = "w-[14px] h-[14px]" }) {
  return (
    <svg viewBox="0 0 16 16" className={className}>
      <rect width="16" height="16" rx="3" fill="#0d8cf0" />
      <path d="M8 3v10M3 7c0 3 2 3 5 3s5 0 5-3" stroke="#fff" strokeWidth="1.800" fill="none" />
      <path d="M8 2L6 4h4z" fill="#fff" />
    </svg>
  );
}

function SLogo({ className }) {
  return (
    <svg viewBox="0 0 26 26" className={className}>
      <rect x="1" y="1" width="24" height="24" rx="5" fill="#ee4a1c" transform="rotate(-10 13 13)" />
      <text x="13" y="21" textAnchor="middle" fontSize="22" fontWeight="bold" fontStyle="italic" fill="#fff" fontFamily="Liberation Sans">S</text>
    </svg>
  );
}

function ImeBar({ ch, className }) {
  return (
    <div className={"absolute flex items-center " + className}>
      <SLogo className="w-[26px] h-[26px] relative z-10 -mr-[3px]" />
      <div className="h-[24px] flex items-center gap-[7px] bg-[#f6f9fd] border border-[#a9c6e8] pl-[7px] pr-[3px] text-[#1d5fb8]">
        <span className="font-bold text-[14px] leading-none">{ch}</span>
        <span className="w-[14px] text-center font-bold text-[12px] leading-none">°,</span>
        <Smile className="w-[17px] h-[17px]" />
        <Mic className="w-[16px] h-[16px]" strokeWidth={3} />
        <Keyboard className="w-[18px] h-[16px]" strokeWidth={3} />
        <User className="w-[17px] h-[16px] text-[#a9b6c6]" strokeWidth={3} />
        <Shirt className="w-[16px] h-[16px] fill-[#1d5fb8] -ml-[6px]" />
        <Wrench className="w-[15px] h-[15px] fill-[#1d5fb8] -ml-px" />
      </div>
    </div>
  );
}

function TaskIcon({ children, active }) {
  return (
    <div className={"h-full flex items-center justify-center shrink-0 border-b-2 border-[#76b9ed] " + (active ? "w-[48px] bg-[#2d3a40]" : "w-[40px]")}>
      {children}
    </div>
  );
}

function Taskbar() {
  return (
    <div className="h-[40px] flex bg-[#03131a] text-white shrink-0">
      <div className="w-[48px] bg-black flex items-center justify-center"><FaWindows className="w-[17px] h-[17px]" /></div>
      <div className="w-[344px] bg-[#3a3a3a] flex items-center pl-[9px] text-[#8d8d8d]">
        <span className="w-[20px] h-[20px] rounded-full border-[3px] border-[#dcdcdc]" />
        <span className="ml-[7px] text-[14px] leading-none">在这里输入你要搜索的内容</span>
        <Mic className="ml-auto mr-[14px] w-[16px] h-[16px] text-[#8d8d8d]" />
      </div>
      <div className="flex-1 flex items-center h-full">
        <svg viewBox="0 0 22 16" className="w-[22px] h-[16px] ml-[13px]"><rect x="5" y="1" width="12" height="14" fill="none" stroke="#fff" strokeWidth="1.300" /><path d="M3 3H1v10h2M19 3h2v10h-2" fill="none" stroke="#fff" /></svg>
        <svg viewBox="0 0 22 22" className="w-[23px] h-[23px] ml-[28px]"><path d="M10 10C3 11 1 5 4 2s8-1 7 6c2-7 9-7 9-2s-4 7-8 5c6 1 8 6 5 9s-7 0-6-6c-1 6-7 7-9 3s2-8 8-7z" fill="#e6e6e6" /></svg>
        <FaInternetExplorer className="w-[21px] h-[22px] ml-[28px]" />
        <div className="relative ml-[31px]">
          <svg viewBox="0 0 22 22" className="w-[20px] h-[22px]"><circle cx="11" cy="11" r="9" fill="none" stroke="#cfcfcf" strokeWidth="1.500" /><path d="M17 8a6 6 0 1 0 0 6c-3 2-6 1-7-2s3-5 6-2" fill="none" stroke="#cfcfcf" strokeWidth="1.500" /></svg>
          <Bell className="absolute -top-[3px] -right-[6px] w-[13px] h-[13px] text-[#f0b020] fill-[#f0b020]" />
        </div>
        <FaEdge className="w-[20px] h-[22px] ml-[32px] text-[#0a78d4]" />
        <FaInternetExplorer className="w-[22px] h-[22px] ml-[28px] text-[#2f8fdc]" />
        <div className="h-full flex ml-[18px] gap-[9px] items-center">
          <TaskIcon><svg viewBox="0 0 22 22" className="w-[22px] h-[22px]"><path d="M1 3h8l2 2h10v15H1z" fill="#f3cf6a" /><rect x="1" y="8" width="20" height="12" fill="#f8e09a" /><rect x="1" y="12" width="20" height="8" fill="#62b4e6" /><rect x="8" y="15" width="6" height="5" fill="#f8e09a" /></svg></TaskIcon>
          <TaskIcon><svg viewBox="0 0 22 24" className="w-[22px] h-[24px]"><path d="M20 3C10 0 2 5 2 13s7 10 11 9 7-6 4-9-7-1-7 2c-2-3 0-7 4-7 2 0 4 0 6-5z" fill="#1285e6" /></svg></TaskIcon>
          <TaskIcon><svg viewBox="0 0 24 24" className="w-[22px] h-[24px]"><circle cx="12" cy="12" r="10" fill="#7ec83c" stroke="#d6f0c0" /><path d="M6 12h12c0-4-3-6-6-6s-6 3-6 6 3 6 6 6c2 0 4-1 5-3" fill="none" stroke="#fff" strokeWidth="2" /></svg></TaskIcon>
          <TaskIcon><svg viewBox="0 0 24 24" className="w-[24px] h-[24px]"><rect x="1" y="1" width="22" height="22" rx="2" fill="#f0a02a" /><path d="M5 5l11-1 2 14-11 2z" fill="#fff6d8" stroke="#b77a20" /><path d="M7 9h7M7 12h7M8 15h6" stroke="#b77a20" /><path d="M20 3l-7 13" stroke="#c9451c" strokeWidth="2" /></svg></TaskIcon>
          <div className="-ml-[5px] h-full"><TaskIcon active><AppLogo className="w-[23px] h-[23px]" /></TaskIcon></div>
        </div>
        <div className="flex items-center ml-[89px] text-[#d8d8d8]">
          <span className="whitespace-nowrap">链接</span>
          <ChevronUp className="w-[14px] h-[14px] ml-[9px]" />
          <svg viewBox="0 0 16 14" className="w-[16px] h-[14px] ml-[9px]"><rect x="1" y="5" width="13" height="8" fill="none" stroke="#e8e8e8" /><rect x="1" y="5" width="7" height="8" fill="#e8e8e8" /><path d="M3 1v4M7 1v4" stroke="#e8e8e8" /></svg>
          <Wifi className="w-[14px] h-[14px] ml-[11px] -rotate-45" />
          <Volume2 className="w-[15px] h-[15px] ml-[7px]" />
          <svg viewBox="0 0 22 16" className="w-[22px] h-[16px] ml-[10px]"><rect x=".5" y=".5" width="21" height="15" fill="none" stroke="#e8e8e8" /><path d="M3 4h16M3 7h16M3 10h16M6 13h10" stroke="#e8e8e8" strokeDasharray="1.500 1" /></svg>
          <span className="ml-[10px] text-[13px] text-white">中</span>
          <SLogo className="w-[19px] h-[19px] ml-[13px]" />
        </div>
        <div className="flex flex-col items-center ml-[13px] w-[60px] text-[#e8e8e8] leading-[19px]">
          <span>16:48</span>
          <span>2018/5/24</span>
        </div>
        <div className="relative ml-[20px]">
          <svg viewBox="0 0 16 16" className="w-[16px] h-[16px]"><path d="M0 0h16v12H8l-3 3v-3H0z" fill="#f0f0f0" /><path d="M3 3h10M3 6h10M3 9h7" stroke="#03131a" /></svg>
          <span className="absolute -right-[7px] top-[6px] w-[16px] h-[16px] rounded-full bg-[#333] border border-[#777] flex items-center justify-center text-[10px] font-bold">1</span>
        </div>
      </div>
    </div>
  );
}

export default function App() {
  const menus = ["文件(F)", "编辑(E)", "楼层(L)", "构件(N)", "绘图(D)", "修改(M)", "钢筋量(Q)", "视图(V)", "工具(T)", "云应用(Y)", "BIM应用(I)", "在线服务(S)"];
  return (
    <div className={"w-[1366px] h-[768px] relative flex flex-col overflow-hidden bg-[#f0f0f0] text-xs text-[#1a1a1a] " + ui}>
      <div className="h-[23px] bg-white flex items-center pl-[2px] shrink-0">
        <AppLogo />
        <span className="ml-[7px] text-[12.55px] whitespace-nowrap">广联达BIM钢筋算量软件 GGJ2013 - [C:\Users\Administrator.PC-20141127NRHM\Desktop\白龙村-2018-02-02-19-24-35(2666版).GGJ12]</span>
        <Minus className="ml-auto w-[14px] h-[14px] text-[#222]" strokeWidth={1} />
        <Square className="ml-[33px] w-[11px] h-[11px] text-[#222]" strokeWidth={1.500} />
        <X className="ml-[33px] mr-[18px] w-[14px] h-[14px] text-[#222]" strokeWidth={1} />
      </div>

      <div className="h-[30px] flex items-center shrink-0 bg-[#f5f5f5]">
        <div className="flex items-center gap-[11.6px] pl-[6px] w-[874px] whitespace-nowrap overflow-hidden">
          {menus.map((m) => <span key={m}>{m}</span>)}
        </div>
        <svg viewBox="0 0 16 16" className="w-4 h-4"><path d="M8 1c5 0 7 3 7 7s-3 7-7 7-7-3-7-7 2-7 7-7z" fill="#2a8fe0" /><circle cx="5.500" cy="7" r="1.500" fill="#fff" /><circle cx="10.500" cy="7" r="1.500" fill="#fff" /><path d="M5 11c2 1 4 1 6 0" stroke="#fff" /></svg>
        <span className="ml-[4px] whitespace-nowrap">广小二</span>
        <div className="ml-[7px] w-[188px] h-[25px] bg-white flex items-center justify-center text-[#136c6c] whitespace-nowrap">如何处理筏板附加钢筋..</div>
        <svg viewBox="0 0 16 16" className="ml-[5px] w-4 h-4"><rect width="16" height="16" rx="2" fill="#4a94d8" /><circle cx="8" cy="6" r="3" fill="#fff" /><path d="M3 14c0-3 3-4 5-4s5 1 5 4z" fill="#fff" /></svg>
        <span className="ml-[4px]">13907298339</span>
        <Caret className="ml-[6px]" />
        <span className="ml-[11px] whitespace-nowrap">造价豆:0</span>
        <Bell className="ml-[10px] w-[14px] h-[16px] text-[#2e7fe0] fill-[#2e7fe0]" />
        <span className="ml-auto mr-[4px] text-[13px] font-bold leading-none -mt-3">»</span>
      </div>

      <Row1 />

      <div className="flex-1 flex min-h-0">
        <Sidebar />
        <div className="w-[5px] shrink-0" />
        <div className="flex-1 flex flex-col min-w-0">
          <ToolRows />
          <Scene />
          <SnapBar />
          <BottomPanel />
        </div>
      </div>

      <StatusBar />
      <Taskbar />

      <ImeBar ch="英" className="left-[663px] top-[24px]" />
      <ImeBar ch="中" className="left-[728px] top-[99px]" />
      <div className="absolute left-[1089px] -top-[31px] w-[50px] h-[50px] rounded-full bg-[#3cb54a] border-2 border-[#d8d8d8] shadow-md flex items-end justify-center pb-[2px] text-white text-[13px] font-bold">60</div>
    </div>
  );
}
